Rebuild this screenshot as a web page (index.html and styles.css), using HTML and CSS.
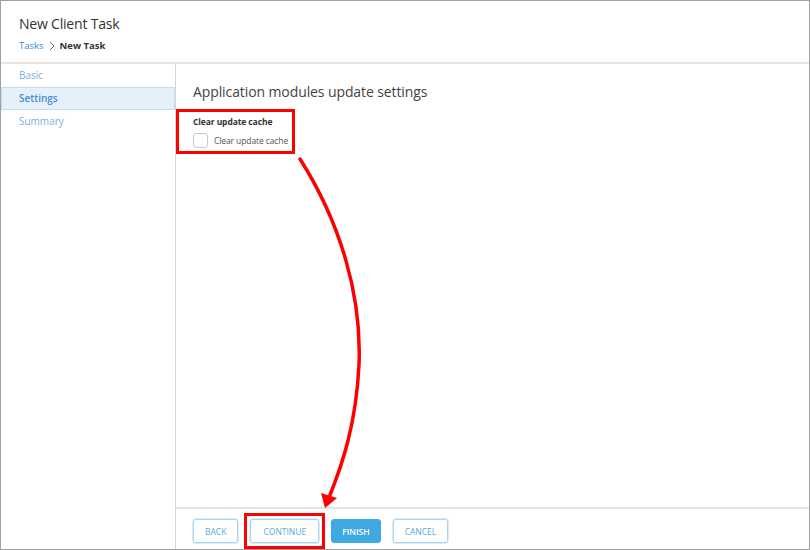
FILE: index.html
```html
<!DOCTYPE html>
<html lang="en">
<head>
    <meta charset="UTF-8">
    <title>New Client Task</title>
    <link rel="stylesheet" href="styles.css">
</head>
<body>
    <div class="frame">
        <header class="page-header">
            <h1 class="page-title">New Client Task</h1>
            <div class="crumbs">
                <a class="crumb-link" href="#">Tasks</a>
                <svg class="crumb-sep" width="8" height="10" viewBox="0 0 8 10"><path d="M2 1l4 4-4 4" fill="none" stroke="#666" stroke-width="1"/></svg>
                <span class="crumb-current">New Task</span>
            </div>
        </header>
        <div class="wizard">
            <nav class="steps">
                <a class="step" href="#">Basic</a>
                <a class="step active" href="#">Settings</a>
                <a class="step" href="#">Summary</a>
            </nav>
            <main class="panel">
                <div class="panel-body">
                    <h2 class="section-title">Application modules update settings</h2>
                    <div class="field-group marked">
                        <div class="field-label">Clear update cache</div>
                        <label class="check">
                            <span class="check-box"></span>
                            <span>Clear update cache</span>
                        </label>
                    </div>
                </div>
                <footer class="panel-footer">
                    <button class="btn">Back</button>
                    <span class="btn-mark"><button class="btn">Continue</button></span>
                    <button class="btn primary">Finish</button>
                    <button class="btn">Cancel</button>
                </footer>
            </main>
        </div>
        <!-- hint arrow from the option down to Continue -->
        <svg class="hint-arrow" width="810" height="550" viewBox="0 0 810 550">
            <path d="M300 159 C 340 222 362 295 359 365 C 356 425 342 465 330 495" fill="none" stroke="#f00" stroke-width="3.5" stroke-linecap="round"/>
            <polygon points="321,493 337,498 325,508" fill="#f00"/>
        </svg>
    </div>
</body>
</html>
```

FILE: styles.css
```css
body {
    margin: 0;
    font-family: "Open Sans", sans-serif;
    color: #333;
    background: #fff;
}
.frame {
    position: relative;
    width: 810px;
    height: 550px;
    box-sizing: border-box;
    border: 1px solid #a0a0a0;
    display: flex;
    flex-direction: column;
}

/* Header */
.page-header {
    height: 61px;
    border-bottom: 2px solid #e5e5e5;
    padding: 0 18px;
}
.page-title {
    margin: 13px 0 0;
    font-size: 14px;
    font-weight: normal;
    line-height: 20px;
    color: #333;
    letter-spacing: -0.2px;
}
.crumbs {
    display: flex;
    align-items: center;
    gap: 4px;
    margin-top: 5px;
    font-size: 9.5px;
    line-height: 14px;
}
.crumb-link {
    color: #3a8fd2;
    text-decoration: none;
}
.crumb-current {
    font-weight: 700;
    color: #333;
}

/* Wizard body */
.wizard {
    flex: 1;
    display: flex;
}
.steps {
    width: 174px;
    border-right: 1px solid #d6d6d6;
    display: flex;
    flex-direction: column;
}
.step {
    box-sizing: border-box;
    height: 23px;
    line-height: 21px;
    padding-left: 17px;
    font-size: 10px;
    color: #7aaee0;
    text-decoration: none;
    border: 1px solid transparent;
}
.step.active {
    background: #e4f0fa;
    border-color: #c3dcf0;
    color: #4a8ccc;
    font-weight: 600;
}
.panel {
    flex: 1;
    display: flex;
    flex-direction: column;
}
.panel-body {
    flex: 1;
    padding: 16px 17px 0;
}
.section-title {
    margin: 0 0 5px;
    font-size: 14px;
    font-weight: normal;
    line-height: 24px;
    color: #444;
    letter-spacing: -0.1px;
}
.field-group {
    width: fit-content;
    margin-left: -17px;
    padding: 4px 4px 3px 14px;
}
.field-group.marked {
    border: 3px solid #f00;
}
.field-label {
    font-size: 8.5px;
    font-weight: 700;
    line-height: 12px;
    color: #333;
    letter-spacing: -0.1px;
}
.check {
    display: flex;
    align-items: center;
    gap: 6px;
    margin-top: 5px;
    font-size: 8.5px;
    color: #555;
    letter-spacing: -0.1px;
}
.check-box {
    width: 13px;
    height: 13px;
    border: 1px solid #c8c8c8;
    border-radius: 3px;
    background: #fff;
}

/* Footer buttons */
.panel-footer {
    height: 42px;
    border-top: 2px solid #e5e5e5;
    padding: 10px 17px 0;
    box-sizing: border-box;
    display: flex;
    align-items: flex-start;
}
.btn {
    height: 24px;
    margin-right: 12px;
    padding: 0 11px;
    border: 1px solid #a6d4f2;
    border-radius: 3px;
    background: #fff;
    color: #5aa9dc;
    font-family: "Open Sans", sans-serif;
    font-size: 8.5px;
    text-transform: uppercase;
    box-shadow: 0 0 0 1px #d8eefb;
}
.btn.primary {
    background: #3ea8e1;
    border-color: #3ea8e1;
    color: #fff;
    font-weight: 600;
    padding: 0 10px;
    box-shadow: none;
}
.btn-mark {
    display: flex;
    margin: -6px 6px -6px -6px;
    padding: 3px;
    border: 3px solid #f00;
}
.btn-mark .btn {
    margin: 0;
    padding: 0 12px;
}

/* Annotation overlay */
.hint-arrow {
    position: absolute;
    left: -1px;
    top: -1px;
    pointer-events: none;
}
```
